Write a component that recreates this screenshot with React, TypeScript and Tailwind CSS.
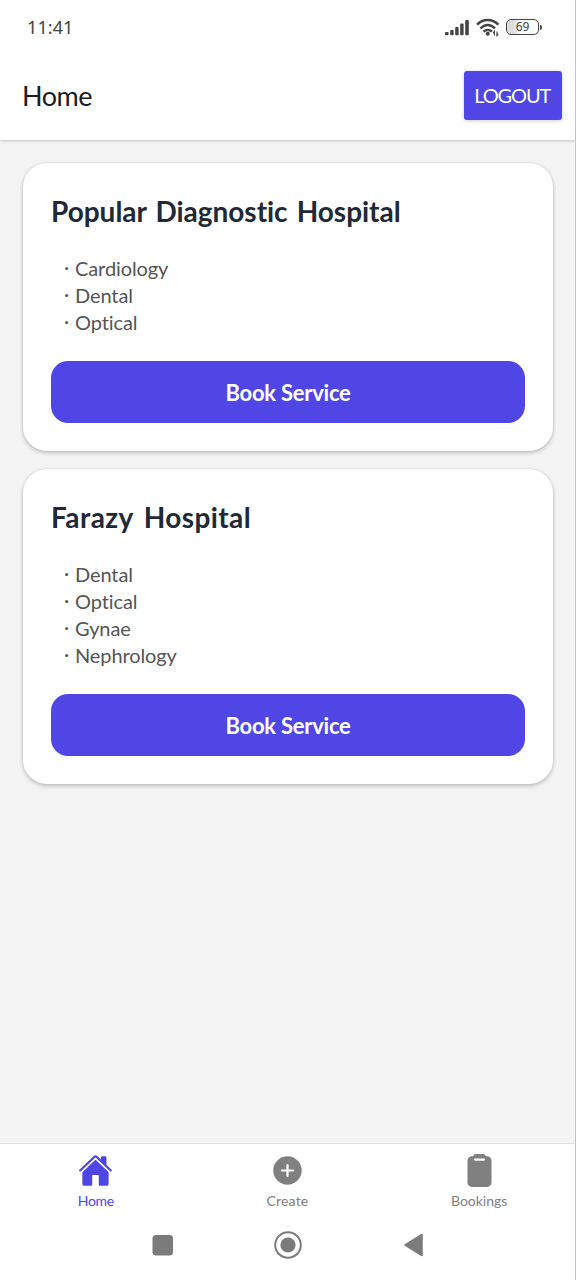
import { IoAddCircle, IoClipboard, IoHome } from "react-icons/io5";

type Hospital = { name: string; services: string[]; titleClass: string };

const hospitals: Hospital[] = [
  {
    name: "Popular Diagnostic Hospital",
    services: ["Cardiology", "Dental", "Optical"],
    titleClass: "tracking-[-0.02px] [word-spacing:2.3px]",
  },
  {
    name: "Farazy Hospital",
    services: ["Dental", "Optical", "Gynae", "Nephrology"],
    titleClass: "tracking-[0.4px] [word-spacing:3.5px]",
  },
];

function StatusBar() {
  return (
    <div className="flex h-[55px] shrink-0 items-center justify-between pr-[34px] pl-[27px] text-[#444]">
      <span className="font-['Noto_Sans'] text-[18px] tracking-[0.1px]">11:41</span>
      <div className="flex items-center">
        <svg width="26" height="18" viewBox="0 0 26 18" fill="currentColor">
          <rect x="1" y="13" width="3.6" height="3.2" rx="1" />
          <rect x="6.2" y="11" width="3.4" height="5.2" rx="1" />
          <rect x="11.2" y="8" width="3.4" height="8.2" rx="1" />
          <rect x="16.2" y="4.5" width="3.4" height="11.7" rx="1" />
          <rect x="21.2" y="1" width="3.6" height="15.2" rx="1" />
        </svg>
        <svg className="ml-1.5" width="24" height="20" viewBox="0 0 24 20" fill="none" stroke="currentColor" strokeWidth="2.5">
          <path d="M1 6.7C7 0.5 16 0.5 22.5 6.7" />
          <path d="M4.5 10.5C9 5.9 14.5 5.9 19 10.5" />
          <path d="M7.6 13.7C10 11.3 13.5 11.3 16 13.7" />
          <circle cx="11.8" cy="15.8" r="2" fill="currentColor" stroke="none" />
          <path d="M18.4 17.5v-4l-1.3 1.6M21 13.5v4l1.3-1.6" strokeWidth="1.2" />
        </svg>
        <div className="mb-px ml-1.5 flex h-4 w-[33px] items-center justify-center rounded-[5px] border-[1.5px] border-current bg-linear-to-r from-[#dcdcdc] from-20% to-white to-45% font-['Noto_Sans'] text-[12px] leading-none">
          69
        </div>
        <div className="mb-px ml-px h-[5px] w-0.5 rounded-r bg-current" />
      </div>
    </div>
  );
}

function HospitalCard({ name, services, titleClass }: Hospital) {
  return (
    <section className="rounded-[24px] bg-white px-7 pt-[30px] pb-7 shadow-[0_2px_4px_rgba(0,0,0,0.2),0_0_3px_rgba(0,0,0,0.1)]">
      <h2 className={`h-[37px] text-[28px] leading-[36px] font-bold whitespace-nowrap text-[#1f2937] ${titleClass}`}>
        {name}
      </h2>
      <ul className="mt-[25px] mb-[25px] pl-[13px] text-[20px] leading-[27px] text-[#555]">
        {services.map((service) => (
          <li key={service} className="flex tracking-[-0.1px]">
            <span className="relative -top-0.5 w-[11px] shrink-0">·</span>
            {service}
          </li>
        ))}
      </ul>
      <button className="flex h-[62.5px] w-full items-center justify-center rounded-[17px] bg-[#4f46e5] pt-px text-[22px] font-bold tracking-[-0.25px] text-white">
        Book Service
      </button>
    </section>
  );
}

export default function App() {
  return (
    <div className="relative flex h-[1280px] w-[576px] flex-col bg-white font-[Lato,sans-serif] [font-variant-ligatures:none]">
      <div className="relative z-10 shrink-0 bg-white shadow-[0_1px_3px_rgba(0,0,0,0.2)]">
        <StatusBar />
        <header className="flex h-[85px] items-center justify-between pr-[14px] pb-[5px] pl-[22px]">
          <h1 className="pt-[3px] text-[27px] tracking-[-0.5px] text-[#1c1c1e]">Home</h1>
          <button className="h-[49px] w-[98.5px] rounded-[3px] bg-[#4f46e5] pr-px pb-px text-[20px] tracking-[-1.1px] text-white shadow-[0_1px_4px_rgba(0,0,0,0.2)]">
            LOGOUT
          </button>
        </header>
      </div>
      <main className="flex flex-1 flex-col gap-[17.5px] bg-[#f3f3f3] px-[23px] pt-[22.5px]">
        {hospitals.map((hospital) => (
          <HospitalCard key={hospital.name} {...hospital} />
        ))}
      </main>
      <nav className="grid h-[68px] shrink-0 grid-cols-3 border-t border-[#e2e2e2] pr-px text-[14px] leading-[18px] text-[#808080]">
        <div className="flex flex-col items-center pt-[9px] text-[#4f46e5]">
          <IoHome size={35} />
          <span className="mt-1 tracking-[-0.3px]">Home</span>
        </div>
        <div className="flex flex-col items-center pt-[9px]">
          <IoAddCircle size={35} />
          <span className="mt-1 tracking-[0.2px]">Create</span>
        </div>
        <div className="flex flex-col items-center pt-[9px]">
          <IoClipboard size={35} />
          <span className="mt-1">Bookings</span>
        </div>
      </nav>
      <div className="flex h-[69px] shrink-0 items-center justify-center pb-0.5 text-[#7b7b7b]">
        <svg width="272" height="28" viewBox="0 0 272 28" fill="currentColor">
          <rect x="0.5" y="4" width="20.5" height="20.5" rx="3.5" />
          <circle cx="136" cy="14" r="12.8" fill="none" stroke="currentColor" strokeWidth="2" />
          <circle cx="136" cy="14" r="7.6" />
          <path d="M253 14 270 3.5v21Z" stroke="currentColor" strokeWidth="1.5" strokeLinejoin="round" />
        </svg>
      </div>
      <div className="absolute inset-y-0 right-0 z-20 w-px bg-[#c4c4c4]" />
    </div>
  );
}
